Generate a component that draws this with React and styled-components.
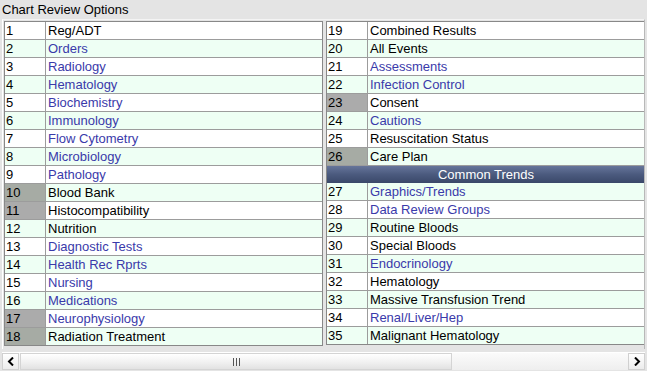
import React from "react";
import styled, { createGlobalStyle } from "styled-components";

const Global = createGlobalStyle`
  html, body { margin: 0; padding: 0; }
  body { background: #e4e4e4; font-family: "Liberation Sans", Arial, sans-serif; }
`;

const left = [
  [1, "Reg/ADT", false, false],
  [2, "Orders", true, false],
  [3, "Radiology", true, false],
  [4, "Hematology", true, false],
  [5, "Biochemistry", true, false],
  [6, "Immunology", true, false],
  [7, "Flow Cytometry", true, false],
  [8, "Microbiology", true, false],
  [9, "Pathology", true, false],
  [10, "Blood Bank", false, true],
  [11, "Histocompatibility", false, true],
  [12, "Nutrition", false, false],
  [13, "Diagnostic Tests", true, false],
  [14, "Health Rec Rprts", true, false],
  [15, "Nursing", true, false],
  [16, "Medications", true, false],
  [17, "Neurophysiology", true, true],
  [18, "Radiation Treatment", false, true],
];

const rightTop = [
  [19, "Combined Results", false, false],
  [20, "All Events", false, false],
  [21, "Assessments", true, false],
  [22, "Infection Control", true, false],
  [23, "Consent", false, true],
  [24, "Cautions", true, false],
  [25, "Resuscitation Status", false, false],
  [26, "Care Plan", false, true],
];

const rightBottom = [
  [27, "Graphics/Trends", true, false],
  [28, "Data Review Groups", true, false],
  [29, "Routine Bloods", false, false],
  [30, "Special Bloods", false, false],
  [31, "Endocrinology", true, false],
  [32, "Hematology", false, false],
  [33, "Massive Transfusion Trend", false, false],
  [34, "Renal/Liver/Hep", true, false],
  [35, "Malignant Hematology", false, false],
];

const Screen = styled.div`
  width: 647px;
  height: 371px;
  background: #e4e4e4;
  display: flex;
  flex-direction: column;
  overflow: hidden;
  font-size: 13px;
  color: #000;
`;

const Title = styled.div`
  height: 19px;
  line-height: 19px;
  padding-left: 2px;
  font-size: 13px;
  color: #000;
`;

const Panel = styled.div`
  margin: 0 2px 0 2px;
  border-left: 1px solid #ffffff;
  border-top: 1px solid #f4f4f4;
  border-right: 1px solid #b8b8b8;
  padding: 1px 0 0 1px;
  height: 328px;
  display: flex;
  gap: 3px;
  overflow: hidden;
`;

const Table = styled.div`
  width: ${(p) => p.$w}px;
  flex: none;
  border: 1px solid #888888;
  align-self: flex-start;
  display: flex;
  flex-direction: column;
  background: #fff;
`;

const Row = styled.div`
  display: grid;
  grid-template-columns: 41px 1fr;
  height: 17px;
  line-height: 17px;
  background: ${(p) => (p.$alt ? "#eefff4" : "#ffffff")};
  & + & {
    border-top: 1px solid #9c9c9c;
  }
`;

const Num = styled.div`
  padding-left: 1px;
  border-right: 1px solid #9c9c9c;
  background: ${(p) => (p.$grey ? (p.$alt ? "#a6aba4" : "#ababab") : "transparent")};
  white-space: nowrap;
`;

const Label = styled.div`
  padding-left: 2px;
  color: ${(p) => (p.$link ? "#3a3aaa" : "#000")};
  white-space: nowrap;
  overflow: hidden;
`;

const Section = styled.div`
  height: 17px;
  line-height: 17px;
  border-top: 1px solid #9c9c9c;
  text-align: center;
  color: #fff;
  background: linear-gradient(#66759a, #4b5a7e 50%, #3a4869);
`;

const Scrollbar = styled.div`
  margin: 3px 2px 0 2px;
  height: 17px;
  display: flex;
  background: linear-gradient(#fafafa, #e8e8e8);
  border-top: 1px solid #ffffff;
`;

const ArrowBtn = styled.div`
  width: 17px;
  height: 17px;
  flex: none;
  display: flex;
  align-items: center;
  justify-content: center;
  background: linear-gradient(#ffffff, #ececec);
  border: 1px solid #d0d0d0;
  box-sizing: border-box;
`;

const Thumb = styled.div`
  width: 432px;
  height: 17px;
  box-sizing: border-box;
  margin-left: 1px;
  border: 1px solid #d4d4d4;
  background: linear-gradient(#ffffff, #f2f2f2 50%, #e2e2e2);
  display: flex;
  align-items: center;
  justify-content: center;
`;

const Track = styled.div`
  flex: 1;
  background: linear-gradient(#fbfbfb, #eeeeee);
`;

const Grip = styled.svg`
  display: block;
`;

function Rows({ items, startAlt }) {
  return items.map(([n, text, link, grey], i) => {
    const alt = (i + startAlt) % 2 === 1;
    return (
      <Row key={n} $alt={alt}>
        <Num $grey={grey} $alt={alt}>{n}</Num>
        <Label $link={link}>{text}</Label>
      </Row>
    );
  });
}

export default function App() {
  return (
    <>
      <Global />
      <Screen>
        <Title>Chart Review Options</Title>
        <Panel>
          <Table $w={317}>
            <Rows items={left} startAlt={0} />
          </Table>
          <Table $w={318}>
            <Rows items={rightTop} startAlt={0} />
            <Section>Common Trends</Section>
            <Rows items={rightBottom} startAlt={1} />
          </Table>
        </Panel>
        <Scrollbar>
          <ArrowBtn>
            <svg width="8" height="9" viewBox="0 0 8 9">
              <path d="M6 0.5 L2 4.5 L6 8.5" fill="none" stroke="#000" strokeWidth="2" />
            </svg>
          </ArrowBtn>
          <Thumb>
            <Grip width="7" height="8" viewBox="0 0 7 8">
              <path d="M0.5 0 V8 M3.5 0 V8 M6.5 0 V8" stroke="#555" strokeWidth="1" />
            </Grip>
          </Thumb>
          <Track />
          <ArrowBtn>
            <svg width="8" height="9" viewBox="0 0 8 9">
              <path d="M2 0.5 L6 4.5 L2 8.5" fill="none" stroke="#000" strokeWidth="2" />
            </svg>
          </ArrowBtn>
        </Scrollbar>
      </Screen>
    </>
  );
}
